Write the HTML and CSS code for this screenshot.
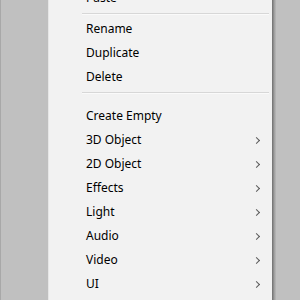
FILE: index.html
```html
<!DOCTYPE html>
<html lang="en">
<head>
    <meta charset="utf-8">
    <title>Hierarchy Context Menu</title>
    <link rel="stylesheet" href="styles.css">
</head>
<body>
    <div id="desktop">
        <div class="gutter"></div>
        <div class="menu">
            <div class="item">Paste</div>
            <div class="separator"></div>
            <div class="item">Rename</div>
            <div class="item">Duplicate</div>
            <div class="item">Delete</div>
            <div class="separator wide"></div>
            <div class="item">Create Empty</div>
            <div class="item sub">3D Object</div>
            <div class="item sub">2D Object</div>
            <div class="item sub">Effects</div>
            <div class="item sub">Light</div>
            <div class="item sub">Audio</div>
            <div class="item sub">Video</div>
            <div class="item sub">UI</div>
            <div class="item sub">Camera</div>
        </div>
        <div class="shadow"></div>
    </div>
</body>
</html>
```

FILE: styles.css
```css
body {
    margin: 0;
    padding: 0;
    font-family: "Noto Sans", "Open Sans", sans-serif;
    font-size: 12px;
    color: #000;
    background-color: #c0c0c0;
    overflow: hidden;
}
#desktop {
    display: flex;
    height: 300px;
    overflow: hidden;
}
.gutter {
    width: 47px;
    border-left: 1px solid #a8a8a8;
    background-color: #c0c0c0;
}
.menu {
    width: 223px;
    border-left: 1px solid #e6e6e6;
    background-color: #f2f2f2;
    margin-top: -14px;
}
.shadow {
    width: 4px;
    background: linear-gradient(to right, #6e6e6e, #8a8a8a, #a6a6a6, #b8b8b8);
}
.item {
    height: 24px;
    line-height: 24px;
    padding-left: 37px;
    padding-right: 12px;
    display: flex;
    justify-content: space-between;
    align-items: center;
    white-space: nowrap;
}
.sub::after {
    content: "";
    width: 4px;
    height: 4px;
    border-top: 1.5px solid #5a5a5a;
    border-right: 1.5px solid #5a5a5a;
    transform: rotate(45deg);
    margin-right: 1px;
}
.separator {
    height: 1px;
    margin: 3px 3px 2px 33px;
    background-color: #d7d7d7;
    border-bottom: 1px solid #fafafa;
}
.separator.wide {
    margin-top: 3px;
    margin-bottom: 10px;
}
```
